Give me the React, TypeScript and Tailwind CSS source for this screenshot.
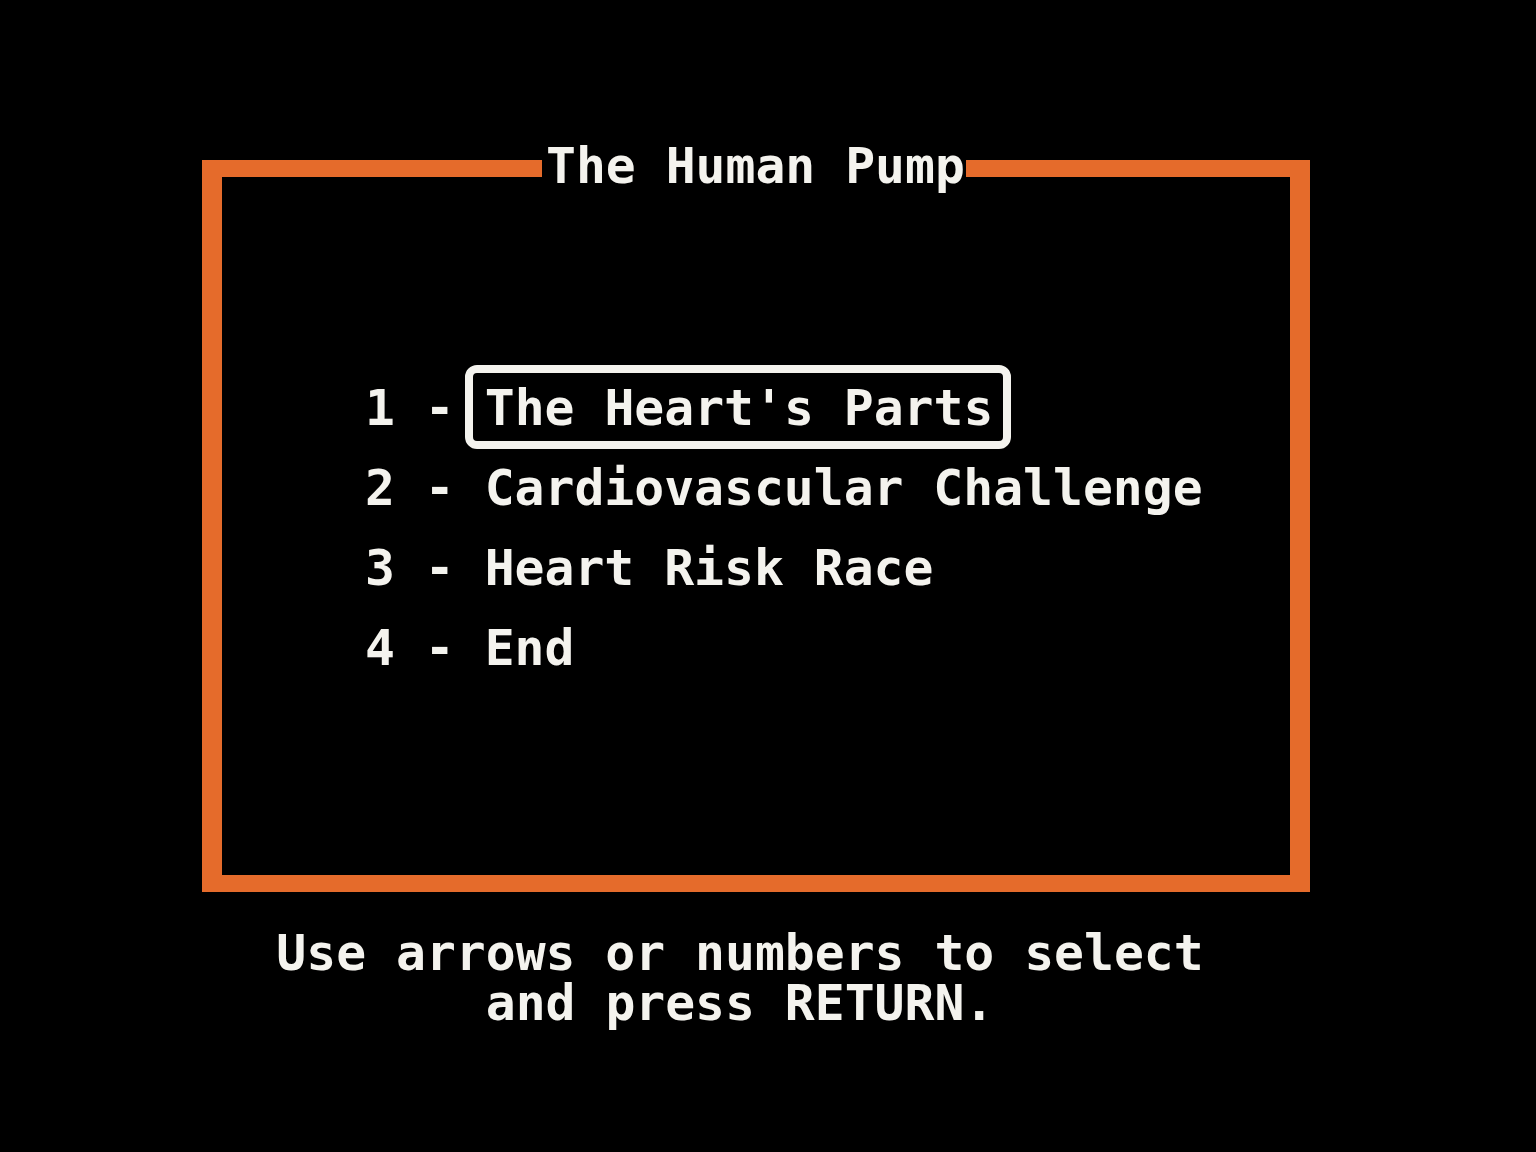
const items = [
  { n: '1', label: "The Heart's Parts" },
  { n: '2', label: 'Cardiovascular Challenge' },
  { n: '3', label: 'Heart Risk Race' },
  { n: '4', label: 'End' },
]

export default function App() {
  const selected = 0

  return (
    <div className="w-[1536px] h-[1152px] bg-black text-[#f4f3ee] font-bold text-[49.7px] leading-none whitespace-pre [font-family:'DejaVu_Sans_Mono',monospace] overflow-hidden">
      <div className="pt-[160px] pl-[202px]">
        {/* orange frame */}
        <div className="relative w-[1108px] h-[732px] border-x-[20px] border-y-[17px] border-[#e56b2b]">
          <span className="absolute left-[320px] -top-[35px] w-[424px] pl-[4px] bg-black">The Human Pump</span>

          <div className="mt-[192px] pl-[143px]">
            {items.map((it, i) => (
              <div key={it.n} className="flex items-center h-[80px]">
                {i === selected ? (
                  <>
                    <span>{`${it.n} -`}</span>
                    <span className="ml-[10px] mb-[4px] border-[8px] border-[#f4f3ee] rounded-[12px] pt-[11px] pb-[7px] pl-[12px] pr-[10px]">
                      {it.label}
                    </span>
                  </>
                ) : (
                  <span>{`${it.n} - ${it.label}`}</span>
                )}
              </div>
            ))}
          </div>
        </div>
      </div>

      {/* help text */}
      <div className="w-[1480px] mt-[37px] text-center">
        <div>Use arrows or numbers to select</div>
        <div>and press RETURN.</div>
      </div>
    </div>
  )
}
